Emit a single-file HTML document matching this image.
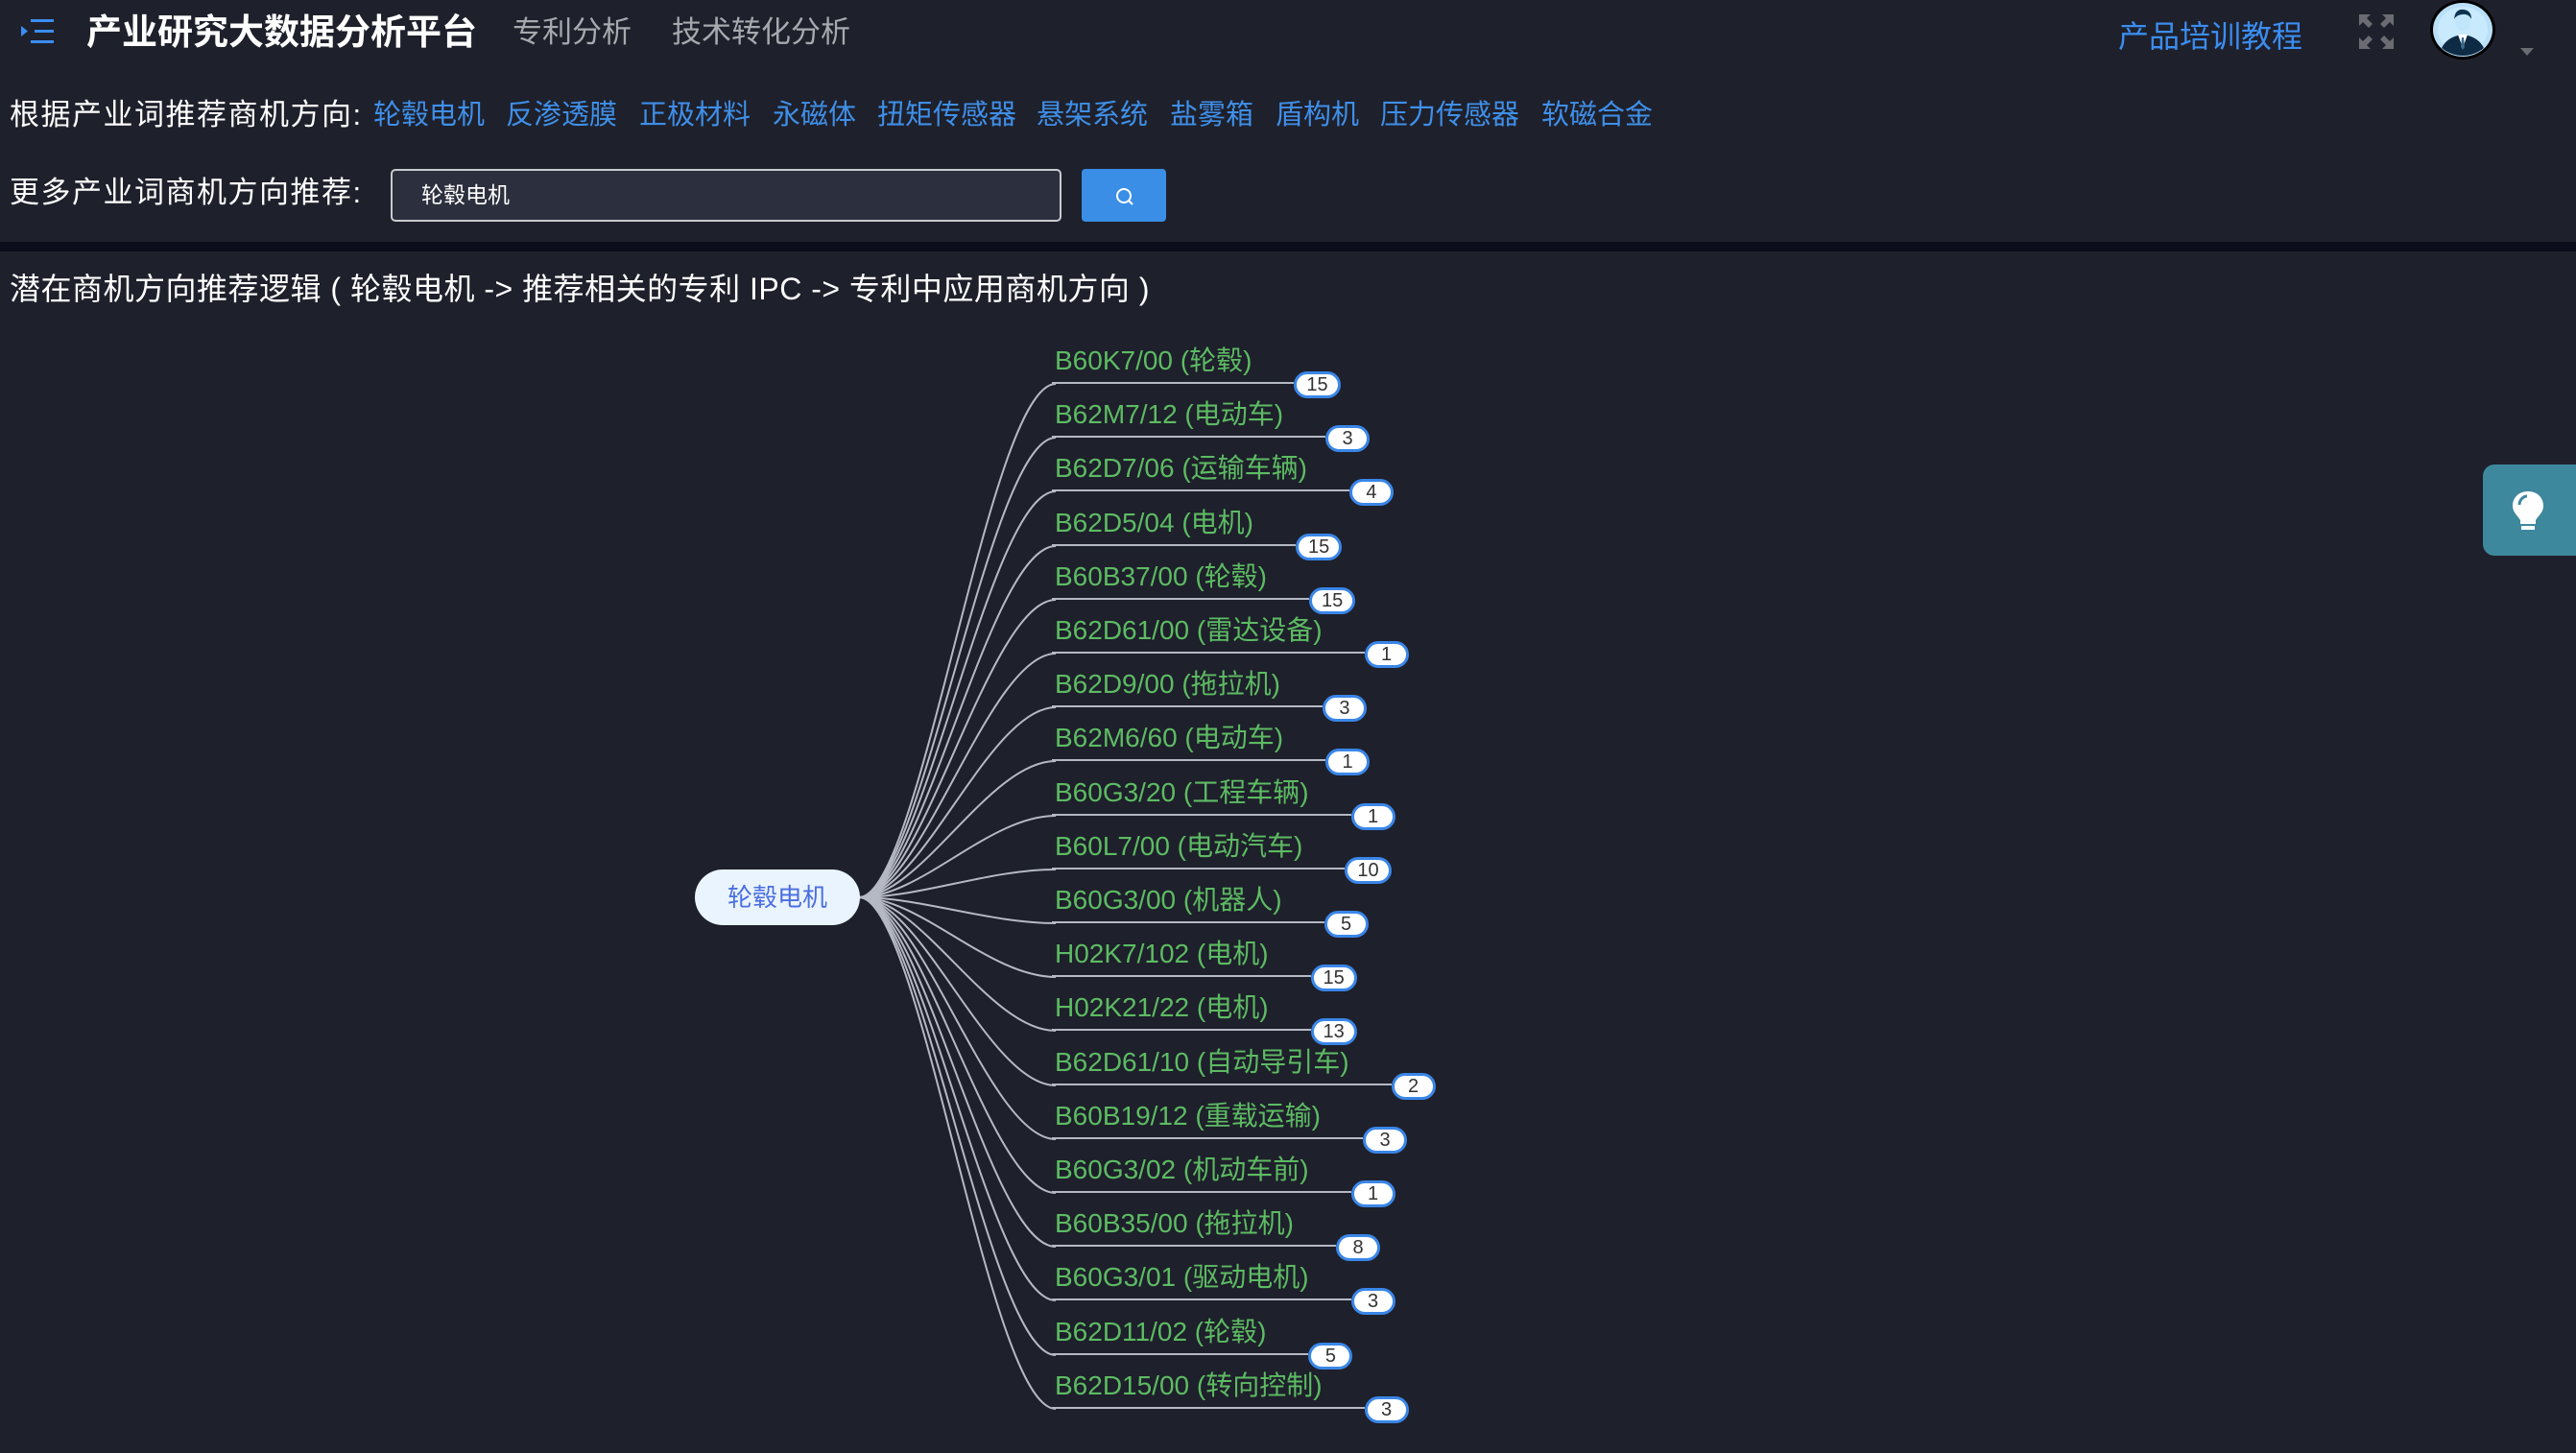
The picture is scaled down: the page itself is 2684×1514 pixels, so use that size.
<!DOCTYPE html>
<html><head><meta charset="utf-8">
<style>
*{margin:0;padding:0;box-sizing:border-box}
html,body{width:2684px;height:1514px;background:#1e202b;overflow:hidden;font-family:"Liberation Sans","Noto Sans CJK SC",sans-serif;position:relative}
.a{position:absolute;white-space:nowrap}
.lk{color:#3f8fe8;font-size:29px;top:101px;line-height:38px}
.row{position:absolute;left:1096px;height:46px}
.row span{display:inline-block;font-size:28px;line-height:42px;color:#5dbb63;padding:0 44px 1px 3px;border-bottom:2px solid #b4b9c4;white-space:nowrap}
.row b{position:absolute;left:100%;top:32px;height:28px;min-width:46px;padding:0 10px;border:3px solid #3a86e8;border-radius:14px;background:#fff;color:#333;font-weight:normal;font-size:20px;line-height:22px;text-align:center}
</style></head><body>
<svg class="a" style="left:22px;top:20px" width="34" height="26" viewBox="0 0 34 26"><rect x="10" y="0" width="24" height="3" fill="#3b8df0"/><rect x="14" y="11" width="20" height="3" fill="#3b8df0"/><rect x="10" y="22" width="24" height="3" fill="#3b8df0"/><path d="M0 7 L7 12.5 L0 18Z" fill="#3b8df0"/></svg>
<div class="a" style="left:90px;top:12px;font-size:37px;color:#fff;font-weight:bold;line-height:44px">产业研究大数据分析平台</div>
<div class="a" style="left:534px;top:14px;font-size:31px;color:#a6a9ae;line-height:40px">专利分析</div>
<div class="a" style="left:700px;top:14px;font-size:31px;color:#a6a9ae;line-height:40px">技术转化分析</div>
<div class="a" style="left:2207px;top:18px;font-size:32px;color:#3b8df0;line-height:40px">产品培训教程</div>
<svg class="a" style="left:2458px;top:15px" width="36" height="36" viewBox="0 0 36 36" fill="#6a6c72"><path d="M0 0h12l-4 4 6 6-4 4-6-6-4 4z"/><path d="M36 0v12l-4-4-6 6-4-4 6-6-4-4z"/><path d="M0 36v-12l4 4 6-6 4 4-6 6 4 4z"/><path d="M36 36h-12l4-4-6-6 4-4 6 6 4-4z"/></svg>
<svg class="a" style="left:2530px;top:-2px" width="72" height="66" viewBox="0 0 72 66"><ellipse cx="36" cy="33" rx="34" ry="31" fill="#000"/><ellipse cx="36" cy="33" rx="31" ry="28" fill="#b9e0f8"/><ellipse cx="36" cy="33" rx="26" ry="24" fill="#c8eafc"/><path d="M14 52 Q20 40 36 38 Q52 40 58 52 Q48 60 36 60 Q24 60 14 52Z" fill="#0e2a44"/><path d="M31 38 L36 52 L41 38Z" fill="#fff"/><path d="M35 41h2l1 10-2 3-2-3z" fill="#3c6a8a"/><ellipse cx="36" cy="24" rx="8" ry="10" fill="#bfe6fb"/><path d="M27 22 Q28 11 37 12 Q45 13 45 22 Q42 16 36 17 Q30 17 27 22Z" fill="#0d3350"/></svg>
<svg class="a" style="left:2626px;top:50px" width="14" height="8"><path d="M0 0h14L7 8z" fill="#6a6c72"/></svg>
<div class="a" style="left:10px;top:100px;font-size:31px;letter-spacing:1.5px;color:#fff;line-height:40px">根据产业词推荐商机方向:</div>
<div class="a lk" style="left:389px">轮毂电机</div>
<div class="a lk" style="left:527px">反渗透膜</div>
<div class="a lk" style="left:666px">正极材料</div>
<div class="a lk" style="left:805px">永磁体</div>
<div class="a lk" style="left:914px">扭矩传感器</div>
<div class="a lk" style="left:1080px">悬架系统</div>
<div class="a lk" style="left:1219px">盐雾箱</div>
<div class="a lk" style="left:1329px">盾构机</div>
<div class="a lk" style="left:1438px">压力传感器</div>
<div class="a lk" style="left:1606px">软磁合金</div>
<div class="a" style="left:10px;top:181px;font-size:31px;letter-spacing:1.5px;color:#fff;line-height:40px">更多产业词商机方向推荐:</div>
<div class="a" style="left:407px;top:176px;width:699px;height:55px;border:2px solid #c9cbd0;border-radius:5px;background:#2c2f3d;color:#fff;font-size:23px;line-height:51px;padding-left:30px">轮毂电机</div>
<div class="a" style="left:1127px;top:176px;width:88px;height:55px;background:#3a8ee6;border-radius:4px"><svg style="position:absolute;left:34px;top:18px" width="22" height="22" viewBox="0 0 22 22" fill="none" stroke="#fff" stroke-width="2"><circle cx="10" cy="10" r="7"/><path d="M15 15l4 4"/></svg></div>
<div class="a" style="left:0;top:252px;width:2684px;height:10px;background:#0b0d1a"></div>
<div class="a" style="left:10px;top:280px;font-size:32px;letter-spacing:0.5px;color:#fff;line-height:42px">潜在商机方向推荐逻辑 ( 轮毂电机 -&gt; 推荐相关的专利 IPC -&gt; 专利中应用商机方向 )</div>
<svg class="a" style="left:0;top:0" width="2684" height="1514" fill="none" stroke="#b4b9c4" stroke-width="2">
<path d="M895 935C960 935 1030 400 1100 400"/><path d="M895 935C960 935 1030 456 1100 456"/><path d="M895 935C960 935 1030 512 1100 512"/><path d="M895 935C960 935 1030 569 1100 569"/><path d="M895 935C960 935 1030 625 1100 625"/><path d="M895 935C960 935 1030 681 1100 681"/><path d="M895 935C960 935 1030 737 1100 737"/><path d="M895 935C960 935 1030 793 1100 793"/><path d="M895 935C960 935 1030 850 1100 850"/><path d="M895 935C960 935 1030 906 1100 906"/><path d="M895 935C960 935 1030 962 1100 962"/><path d="M895 935C960 935 1030 1018 1100 1018"/><path d="M895 935C960 935 1030 1074 1100 1074"/><path d="M895 935C960 935 1030 1131 1100 1131"/><path d="M895 935C960 935 1030 1187 1100 1187"/><path d="M895 935C960 935 1030 1243 1100 1243"/><path d="M895 935C960 935 1030 1299 1100 1299"/><path d="M895 935C960 935 1030 1355 1100 1355"/><path d="M895 935C960 935 1030 1412 1100 1412"/><path d="M895 935C960 935 1030 1468 1100 1468"/>
</svg>
<div class="a" style="left:724px;top:906px;width:172px;height:58px;border-radius:29px;background:#eaf4ff;color:#4a6ee0;font-size:26px;line-height:58px;text-align:center">轮毂电机</div>
<div class="row" style="top:355px"><span>B60K7/00 (轮毂)</span><b>15</b></div>
<div class="row" style="top:411px"><span>B62M7/12 (电动车)</span><b>3</b></div>
<div class="row" style="top:467px"><span>B62D7/06 (运输车辆)</span><b>4</b></div>
<div class="row" style="top:524px"><span>B62D5/04 (电机)</span><b>15</b></div>
<div class="row" style="top:580px"><span>B60B37/00 (轮毂)</span><b>15</b></div>
<div class="row" style="top:636px"><span>B62D61/00 (雷达设备)</span><b>1</b></div>
<div class="row" style="top:692px"><span>B62D9/00 (拖拉机)</span><b>3</b></div>
<div class="row" style="top:748px"><span>B62M6/60 (电动车)</span><b>1</b></div>
<div class="row" style="top:805px"><span>B60G3/20 (工程车辆)</span><b>1</b></div>
<div class="row" style="top:861px"><span>B60L7/00 (电动汽车)</span><b>10</b></div>
<div class="row" style="top:917px"><span>B60G3/00 (机器人)</span><b>5</b></div>
<div class="row" style="top:973px"><span>H02K7/102 (电机)</span><b>15</b></div>
<div class="row" style="top:1029px"><span>H02K21/22 (电机)</span><b>13</b></div>
<div class="row" style="top:1086px"><span>B62D61/10 (自动导引车)</span><b>2</b></div>
<div class="row" style="top:1142px"><span>B60B19/12 (重载运输)</span><b>3</b></div>
<div class="row" style="top:1198px"><span>B60G3/02 (机动车前)</span><b>1</b></div>
<div class="row" style="top:1254px"><span>B60B35/00 (拖拉机)</span><b>8</b></div>
<div class="row" style="top:1310px"><span>B60G3/01 (驱动电机)</span><b>3</b></div>
<div class="row" style="top:1367px"><span>B62D11/02 (轮毂)</span><b>5</b></div>
<div class="row" style="top:1423px"><span>B62D15/00 (转向控制)</span><b>3</b></div>
<div class="a" style="left:2587px;top:484px;width:97px;height:95px;background:#3e889e;border-radius:12px 0 0 12px"><svg style="position:absolute;left:29px;top:26px" width="36" height="44" viewBox="0 0 36 44"><path d="M18 2C8 2 2 9 2 17c0 7 5 10 8 15v4h16v-4c3-5 8-8 8-15C34 9 28 2 18 2z" fill="#fff"/><path d="M9 16c0-5 4-9 8-9" stroke="#3e889e" stroke-width="3" fill="none"/><rect x="11" y="38" width="14" height="4" fill="#fff"/></svg></div>
</body></html>
